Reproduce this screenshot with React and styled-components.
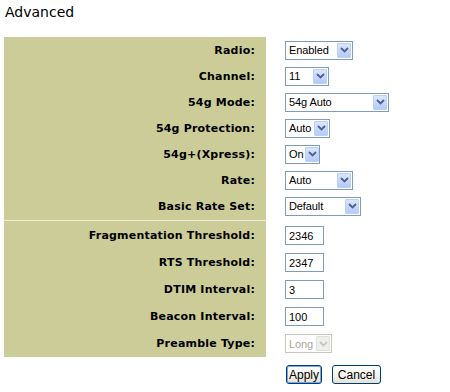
import React from "react";
import styled, { createGlobalStyle } from "styled-components";

const Global = createGlobalStyle`
  html, body { margin: 0; padding: 0; background: #fff; }
  body { font-family: "DejaVu Sans", Verdana, sans-serif; color: #000; }
`;

const KHAKI = "#cccc99";

const Page = styled.div`
  padding: 4px 0 0 4px;
  width: 446px;
`;

const Title = styled.h1`
  margin: 0 0 16px 1px;
  font-family: "DejaVu Sans", Verdana, sans-serif;
  font-weight: normal;
  font-size: 14px;
  line-height: 17px;
`;

const Section = styled.div`
  display: flex;
  flex-direction: column;
`;

const Row = styled.div`
  display: grid;
  grid-template-columns: 262px 1fr;
  height: ${(p) => p.$h}px;
`;

const Label = styled.div`
  background: ${KHAKI};
  display: flex;
  align-items: center;
  justify-content: flex-end;
  padding-right: 11px;
  font-family: "DejaVu Sans", Verdana, sans-serif;
  font-weight: bold;
  font-size: 11px;
  letter-spacing: 0.2px;
  white-space: nowrap;
`;

const Cell = styled.div`
  display: flex;
  align-items: center;
  padding-left: 19px;
`;

const Divider = styled.div`
  width: 262px;
  height: 1px;
  border-top: 1px solid ${KHAKI};
  border-bottom: 1px solid ${KHAKI};
  background: #eeeedd;
`;

const SelectBox = styled.div`
  box-sizing: border-box;
  width: ${(p) => p.$w}px;
  height: 19px;
  border: 1px solid ${(p) => (p.$disabled ? "#c9c7ba" : "#7f9db9")};
  background: #fff;
  display: flex;
  align-items: center;
  justify-content: space-between;
  gap: 2px;
  padding: 0 1px 0 3px;
  font-family: "Liberation Sans", Arial, sans-serif;
  font-size: 11px;
  letter-spacing: -0.1px;
  color: ${(p) => (p.$disabled ? "#aca899" : "#000")};
`;

const Arrow = styled.span`
  box-sizing: border-box;
  flex: none;
  width: 14px;
  height: 15px;
  display: flex;
  align-items: center;
  justify-content: center;
  border: 1px solid ${(p) => (p.$disabled ? "#e0dfd9" : "#bad0f6")};
  border-radius: 1px;
  background: ${(p) =>
    p.$disabled
      ? "#efefef"
      : "linear-gradient(180deg, #dae6fe 0%, #c3d5fd 60%, #b6cafa 100%)"};
`;

const TextBox = styled.div`
  box-sizing: border-box;
  width: 39px;
  height: 19px;
  border: 1px solid #7f9db9;
  display: flex;
  align-items: center;
  padding-left: 3px;
  font-family: "Liberation Sans", Arial, sans-serif;
  font-size: 11px;
`;

const Button = styled.button`
  box-sizing: border-box;
  height: 19px;
  width: ${(p) => p.$w}px;
  padding: 0;
  border: 1px solid #003c74;
  border-radius: 3px;
  background: linear-gradient(180deg, #ffffff 0%, #f2f1ea 60%, #e3e1d5 100%);
  box-shadow: ${(p) => (p.$default ? "inset 0 0 0 1px #7aa5e9" : "none")};
  font-family: "Liberation Sans", Arial, sans-serif;
  font-size: 12px;
  color: #000;
`;

const ButtonRow = styled.div`
  display: flex;
  gap: 10px;
  margin: 8px 0 0 282px;
`;

function Chevron({ disabled }) {
  return (
    <svg width="9" height="6" viewBox="0 0 9 6">
      <path
        d="M1 1 L4.5 4.5 L8 1"
        fill="none"
        stroke={disabled ? "#c9c7ba" : "#4d6185"}
        strokeWidth="1.8"
      />
    </svg>
  );
}

function Select({ value, w, disabled }) {
  return (
    <SelectBox $w={w} $disabled={disabled}>
      <span>{value}</span>
      <Arrow $disabled={disabled}>
        <Chevron disabled={disabled} />
      </Arrow>
    </SelectBox>
  );
}

const top = [
  ["Radio:", "Enabled", 68],
  ["Channel:", "11", 44],
  ["54g Mode:", "54g Auto", 104],
  ["54g Protection:", "Auto", 45],
  ["54g+(Xpress):", "On", 35],
  ["Rate:", "Auto", 68],
  ["Basic Rate Set:", "Default", 76],
];

const bottom = [
  ["Fragmentation Threshold:", "2346"],
  ["RTS Threshold:", "2347"],
  ["DTIM Interval:", "3"],
  ["Beacon Interval:", "100"],
];

export default function App() {
  return (
    <Page>
      <Global />
      <Title>Advanced</Title>
      <Section>
        {top.map(([l, v, w]) => (
          <Row key={l} $h={26}>
            <Label>{l}</Label>
            <Cell>
              <Select value={v} w={w} />
            </Cell>
          </Row>
        ))}
      </Section>
      <Divider />
      <Section>
        {bottom.map(([l, v]) => (
          <Row key={l} $h={27}>
            <Label>{l}</Label>
            <Cell>
              <TextBox>{v}</TextBox>
            </Cell>
          </Row>
        ))}
        <Row $h={27}>
          <Label>Preamble Type:</Label>
          <Cell>
            <Select value="Long" w={47} disabled />
          </Cell>
        </Row>
      </Section>
      <ButtonRow>
        <Button $w={36} $default>Apply</Button>
        <Button $w={49}>Cancel</Button>
      </ButtonRow>
    </Page>
  );
}
